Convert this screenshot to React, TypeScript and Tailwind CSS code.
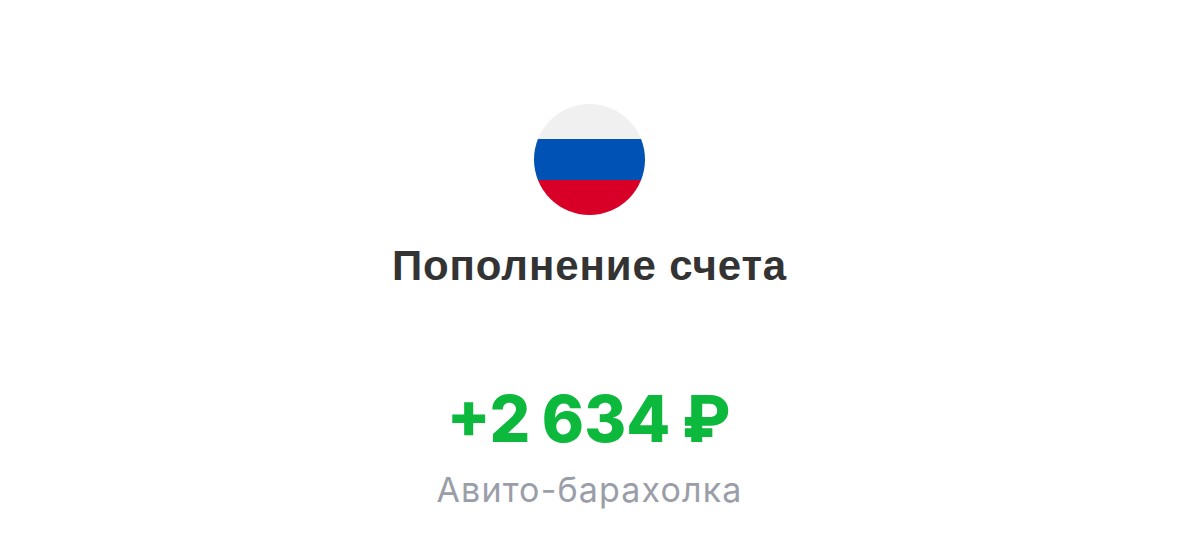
export default function App() {
  return (
    <div className="w-[1179px] h-[538px] bg-white flex flex-col items-center overflow-hidden font-['Inter',sans-serif]">
      <div className="mt-[104px] w-[111px] h-[111px] rounded-full overflow-hidden flex flex-col">
        <div className="h-[35px] bg-[#f0f0f0]" />
        <div className="h-[41px] bg-[#0052b4]" />
        <div className="h-[35px] bg-[#d80027]" />
      </div>
      <h1 className="mt-[25px] text-[42px] leading-[52px] font-bold tracking-[0.9px] text-[#333333] font-['Liberation_Sans',sans-serif]">
        Пополнение счета
      </h1>
      <div className="mt-[88px] -ml-[2px] text-[64px] leading-[78px] font-extrabold text-[#0cb93c] [word-spacing:-2.5px]">+2 634 ₽</div>
      <div className="mt-[12px] text-[34px] leading-[40px] tracking-[1.15px] text-[#9a9ea8]">Авито-барахолка</div>
    </div>
  );
}
